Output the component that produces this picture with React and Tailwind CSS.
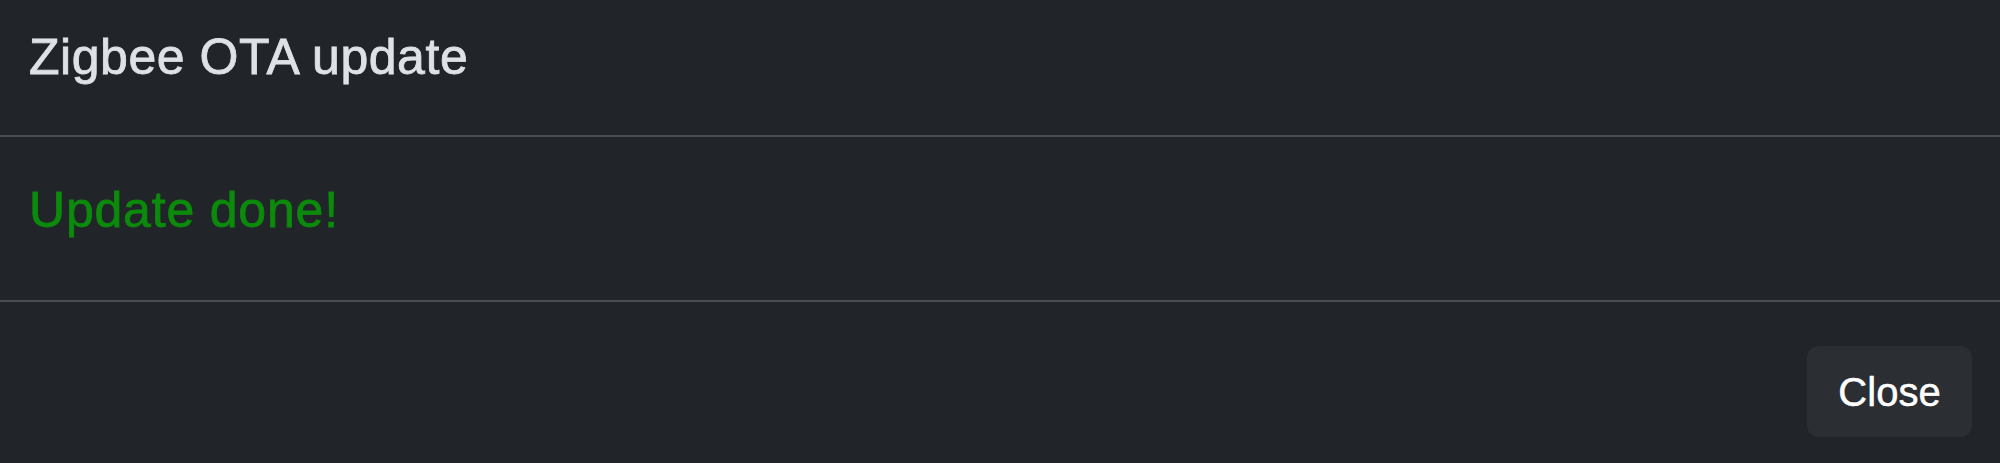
export default function App() {
  return (
    <div className="w-[2000px] h-[463px] bg-[#212429] flex flex-col font-['Liberation_Sans',Arial,sans-serif]">
      {/* Header */}
      <div className="pl-[29px] pt-[27px] pb-[48px] border-b-2 border-[#4a4e54]">
        <h5 className="text-[50px] leading-[60px] tracking-[0.55px] text-[#dee2e6] [-webkit-text-stroke:0.8px_#dee2e6]">Zigbee OTA update</h5>
      </div>

      {/* Body */}
      <div className="pl-[29px] pt-[43px] pb-[60px] border-b-2 border-[#4a4e54]">
        <p className="text-[50px] leading-[60px] tracking-[0.8px] text-[#0b8a0b] [-webkit-text-stroke:0.8px_#0b8a0b]">Update done!</p>
      </div>

      {/* Footer */}
      <div className="flex justify-end pt-[44px] pr-[28px]">
        <button className="w-[165px] h-[91px] rounded-[12px] bg-[#2b2e33] text-white text-[40px] [-webkit-text-stroke:0.5px_#ffffff] flex items-center justify-center">
          Close
        </button>
      </div>
    </div>
  )
}
